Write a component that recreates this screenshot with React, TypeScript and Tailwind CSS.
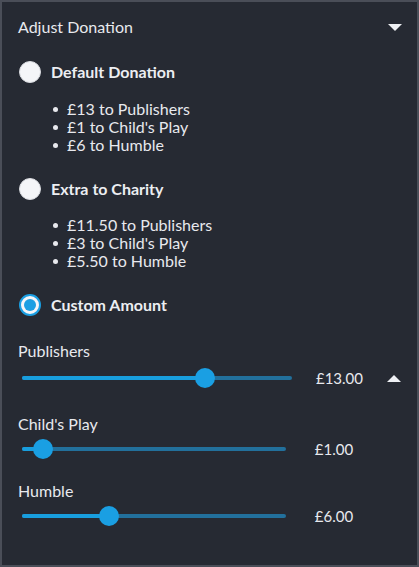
import React from "react";

const font = { fontFamily: "Lato, 'Open Sans', sans-serif" };

interface Option {
  label: string;
  lines: string[];
}

const options: Option[] = [
  { label: "Default Donation", lines: ["£13 to Publishers", "£1 to Child's Play", "£6 to Humble"] },
  { label: "Extra to Charity", lines: ["£11.50 to Publishers", "£3 to Child's Play", "£5.50 to Humble"] },
];

function Radio({ checked }: { checked?: boolean }) {
  if (checked) {
    return (
      <span className="ml-px flex h-[22px] w-[22px] shrink-0 items-center justify-center rounded-full border-2 border-[#1a9fe3] bg-[#f4f5f8]">
        <span className="h-[12px] w-[12px] rounded-full bg-[#1a9fe3]" />
      </span>
    );
  }
  return <span className="ml-px h-[22px] w-[22px] shrink-0 rounded-full border border-[#d9dbe0] bg-[#f4f5f8]" />;
}

function Triangle({ up }: { up?: boolean }) {
  return (
    <svg width="14" height="7" viewBox="0 0 14 7" className="shrink-0">
      {up ? <path d="M7 0 L14 7 L0 7 Z" fill="#eef0f4" /> : <path d="M0 0 L14 0 L7 7 Z" fill="#eef0f4" />}
    </svg>
  );
}

function Slider({ width, pos }: { width: number; pos: number }) {
  return (
    <div className="relative ml-[4px] h-[20px] shrink-0" style={{ width }}>
      <div className="absolute left-0 right-0 top-[8px] h-[4px] rounded-full bg-[#22709c]" />
      <div className="absolute left-0 top-[8px] h-[4px] rounded-full bg-[#189ede]" style={{ width: pos }} />
      <div
        className="absolute top-[0px] h-[20px] w-[20px] -translate-x-1/2 rounded-full bg-[#1a9fe3]"
        style={{ left: pos }}
      />
    </div>
  );
}

export default function App() {
  return (
    <div
      className="flex h-[567px] w-[419px] flex-col border-2 border-[#4a4e58] bg-[#262a33] pl-[16px] pr-[15px] pt-[15px] text-[#e8e9ee]"
      style={font}
    >
      {/* Header */}
      <div className="flex h-[20px] items-center justify-between">
        <span className="text-[16px] leading-[20px]">Adjust Donation</span>
        <Triangle />
      </div>

      {options.map((opt, i) => (
        <div key={opt.label} className="mt-[24px]">
          <div className="flex h-[22px] items-center gap-[10px]">
            <Radio />
            <span className="text-[16px] font-bold leading-[22px] text-[#eceef2]">{opt.label}</span>
          </div>
          <ul className={i === 0 ? "mt-[17px]" : "mt-[16px]"}>
            {opt.lines.map((line) => (
              <li key={line} className="flex h-[18px] items-center text-[16px] leading-[18px]">
                <span className="ml-[35px] h-[5px] w-[5px] rounded-full bg-[#e8e9ee]" />
                <span className="ml-[9px]">{line}</span>
              </li>
            ))}
          </ul>
        </div>
      ))}

      {/* Custom */}
      <div className="mt-[24px] flex h-[22px] items-center gap-[10px]">
        <Radio checked />
        <span className="text-[16px] font-bold leading-[22px] text-[#eceef2]">Custom Amount</span>
      </div>

      <div className="mt-[25px] text-[16px] leading-[20px]">Publishers</div>
      <div className="mt-[7px] flex h-[20px] items-center">
        <Slider width={270} pos={183} />
        <span className="w-[95px] text-center text-[15px] leading-[20px]">£13.00</span>
        <Triangle up />
      </div>

      <div className="mt-[26px] text-[16px] leading-[20px]">Child's Play</div>
      <div className="mt-[5px] flex h-[20px] items-center">
        <Slider width={264} pos={21} />
        <span className="w-[96px] text-center text-[15px] leading-[20px]">£1.00</span>
      </div>

      <div className="mt-[22px] text-[16px] leading-[20px]">Humble</div>
      <div className="mt-[5px] flex h-[20px] items-center">
        <Slider width={264} pos={87} />
        <span className="w-[96px] text-center text-[15px] leading-[20px]">£6.00</span>
      </div>
    </div>
  );
}
